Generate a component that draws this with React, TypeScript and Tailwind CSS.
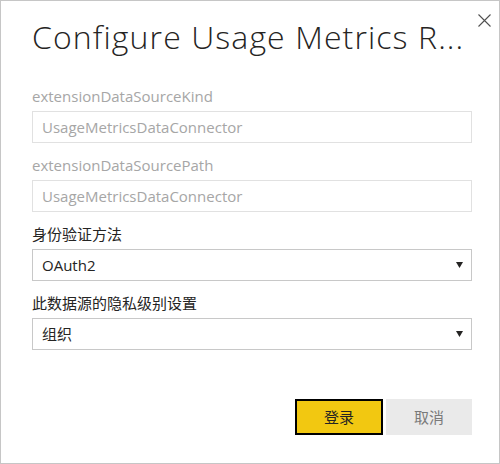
import React from 'react';

const fontStack = '"Open Sans", "Noto Sans CJK SC", sans-serif';

function Label({ text, muted }: { text: string; muted?: boolean }) {
  return (
    <div className={`h-[20px] leading-[20px] text-[15px] ${muted ? 'text-[#a6a6a6]' : 'text-[#252423]'}`}>
      {text}
    </div>
  );
}

function ReadOnlyInput({ value }: { value: string }) {
  return (
    <div className="h-[32px] border border-[#e1e1e1] flex items-center pl-[9px] text-[15px] text-[#a6a6a6]">
      {value}
    </div>
  );
}

function Select({ value }: { value: string }) {
  return (
    <div className="h-[32px] border border-[#c8c8c8] flex items-center justify-between pl-[9px] pr-[8px] text-[15px] text-[#252423]">
      <span>{value}</span>
      <svg width="7" height="6" viewBox="0 0 7 6">
        <path d="M0 0 H7 L3.5 6 Z" fill="#252423" />
      </svg>
    </div>
  );
}

export default function App() {
  const fields = [
    { label: 'extensionDataSourceKind', value: 'UsageMetricsDataConnector', kind: 'input' },
    { label: 'extensionDataSourcePath', value: 'UsageMetricsDataConnector', kind: 'input' },
    { label: '身份验证方法', value: 'OAuth2', kind: 'select' },
    { label: '此数据源的隐私级别设置', value: '组织', kind: 'select' },
  ];

  return (
    <div
      className="relative w-[500px] h-[464px] bg-white border border-[#c6c6c6] flex flex-col pl-[31px] pr-[27px]"
      style={{ fontFamily: fontStack }}
    >
      <button type="button" className="absolute top-[13px] right-[8px] p-0">
        <svg width="13" height="13" viewBox="0 0 13 13">
          <path d="M0.5 0.5 L12.5 12.5 M12.5 0.5 L0.5 12.5" stroke="#505050" strokeWidth="1.1" />
        </svg>
      </button>

      <h1 className="mt-[14px] h-[44px] leading-[44px] text-[32px] font-light tracking-[1.1px] text-[#252423] whitespace-nowrap">
        Configure Usage Metrics R...
      </h1>

      <div className="mt-[27px] flex flex-col gap-[12px]">
        {fields.map(f => (
          <div key={f.label} className="flex flex-col gap-[5px]">
            <Label text={f.label} muted={f.kind === 'input'} />
            {f.kind === 'input' ? <ReadOnlyInput value={f.value} /> : <Select value={f.value} />}
          </div>
        ))}
      </div>

      <div className="mt-auto mb-[28px] flex justify-end gap-[3px]">
        <button type="button" className="w-[88px] h-[36px] bg-[#f2c811] border-2 border-[#000] text-[15px] text-[#252423]">
          登录
        </button>
        <button type="button" className="w-[86px] h-[36px] bg-[#eaeaea] text-[15px] text-[#7a7a7a]">
          取消
        </button>
      </div>
    </div>
  );
}
